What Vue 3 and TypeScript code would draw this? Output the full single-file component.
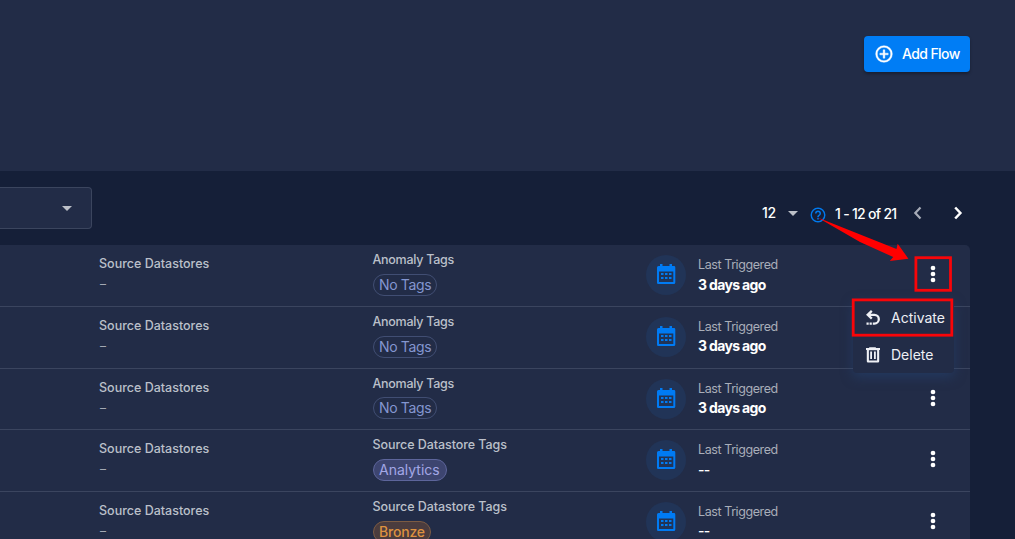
<script setup lang="ts">
interface FlowRow {
  tagTitle: string
  tag: string
  tone: 'none' | 'violet' | 'bronze'
  triggered: string
}

const rows: FlowRow[] = [
  { tagTitle: 'Anomaly Tags', tag: 'No Tags', tone: 'none', triggered: '3 days ago' },
  { tagTitle: 'Anomaly Tags', tag: 'No Tags', tone: 'none', triggered: '3 days ago' },
  { tagTitle: 'Anomaly Tags', tag: 'No Tags', tone: 'none', triggered: '3 days ago' },
  { tagTitle: 'Source Datastore Tags', tag: 'Analytics', tone: 'violet', triggered: '--' },
  { tagTitle: 'Source Datastore Tags', tag: 'Bronze', tone: 'bronze', triggered: '--' },
]
</script>

<template>
  <div class="page">
    <header class="header">
      <button class="add">
        <svg class="add-icon" viewBox="0 0 24 24" width="20" height="20">
          <path fill="currentColor" stroke="currentColor" stroke-width="0.500" d="M12 20c-4.410 0-8-3.590-8-8s3.590-8 8-8 8 3.590 8 8-3.590 8-8 8m0-18A10 10 0 0 0 2 12a10 10 0 0 0 10 10 10 10 0 0 0 10-10A10 10 0 0 0 12 2m1 5h-2v4H7v2h4v4h2v-4h4v-2h-4z" />
        </svg>
        <span class="add-text">Add Flow</span>
      </button>
    </header>

    <div class="toolbar">
      <div class="select">
        <svg class="caret" viewBox="0 0 10 5" width="10" height="5"><path fill="currentColor" d="M0 0h10L5 5z" /></svg>
      </div>
      <div class="pager">
        <span class="size">12</span>
        <svg class="caret size-caret" viewBox="0 0 10 5" width="10" height="5"><path fill="currentColor" d="M0 0h10L5 5z" /></svg>
        <svg class="help" viewBox="0 0 24 24" width="18" height="18">
          <path fill="currentColor" d="M11 18h2v-2h-2zm1-16A10 10 0 0 0 2 12a10 10 0 0 0 10 10 10 10 0 0 0 10-10A10 10 0 0 0 12 2m0 18c-4.410 0-8-3.590-8-8s3.590-8 8-8 8 3.590 8 8-3.590 8-8 8m0-14a4 4 0 0 0-4 4h2a2 2 0 0 1 2-2 2 2 0 0 1 2 2c0 2-3 1.750-3 5h2c0-2.250 3-2.500 3-5a4 4 0 0 0-4-4" />
        </svg>
        <span class="range">1 - 12 of 21</span>
        <svg class="prev" viewBox="0 0 10 14" width="10" height="14"><path d="M7.500 1.500 2.300 7l5.200 5.500" fill="none" stroke="currentColor" stroke-width="2.200" /></svg>
        <svg class="next" viewBox="0 0 10 14" width="10" height="14"><path d="M2.200 1.500 7.400 7l-5.200 5.500" fill="none" stroke="currentColor" stroke-width="2.500" /></svg>
      </div>
    </div>

    <main class="table">
      <div v-for="(row, i) in rows" :key="i" class="row">
        <div class="cell source">
          <span class="label source-label">Source Datastores</span>
          <span class="dash">–</span>
        </div>
        <div class="cell tags">
          <span class="label" :class="row.tone === 'none' ? 'anomaly-label' : 'store-label'">{{ row.tagTitle }}</span>
          <span class="tag" :class="row.tone">{{ row.tag }}</span>
        </div>
        <div class="cell time">
          <span class="disc">
            <svg viewBox="0 0 20 20" width="20" height="20">
              <path fill="currentColor" fill-rule="evenodd" d="M4 0h2.500v2h7V0H16v2h1.500A1.500 1.500 0 0 1 19.300 3.500v15a1.500 1.500 0 0 1-1.500 1.500h-15A1.500 1.500 0 0 1 1 18.500v-15A1.500 1.500 0 0 1 2.500 2H4zM3 7.500V18h14.300V7.500z" />
              <path fill="currentColor" d="M5 9h2.500v2H5zm4 0h2.500v2H9zm4 0h2.500v2H13zM5 13h2.500v2H5zm4 0h2.500v2H9zm4 0h2.500v2H13z" />
            </svg>
          </span>
          <span class="stamp">
            <span class="label last-label">Last Triggered</span>
            <strong class="when" :class="{ empty: row.triggered === '--' }">{{ row.triggered }}</strong>
          </span>
        </div>
        <svg class="kebab" viewBox="0 0 6 18" width="6" height="18">
          <g fill="#fff"><circle cx="3" cy="3" r="2.350" /><circle cx="3" cy="9" r="2.350" /><circle cx="3" cy="15" r="2.350" /></g>
        </svg>
      </div>
    </main>

    <div class="menu">
      <div class="item">
        <svg viewBox="0 0 16 16" width="16" height="16">
          <path d="M6.800.9 2.700 4.800l4.100 3.900M3 4.800h6.400a4.400 4.400 0 0 1 0 8.800H7.800" fill="none" stroke="currentColor" stroke-width="2.300" />
          <path fill="currentColor" d="M4.600 12.500h2.200v2.200H4.600zM1.500 12.500h2.200v2.200H1.500z" />
        </svg>
        <span class="activate">Activate</span>
      </div>
      <div class="item">
        <svg viewBox="0 0 16 16" width="16" height="16">
          <path fill="currentColor" d="M4.500.3h6l.7.7H15v2h-.8v11.300a1.200 1.200 0 0 1-1.200 1.200H3a1.200 1.200 0 0 1-1.200-1.200V3H1V1h2.800z" />
          <path fill="#222c47" d="M3.900 3.200h8.200v10.300H3.900z" />
          <path fill="currentColor" d="M5.200 4.500H7V12H5.200zm3.800 0h1.800V12H9z" />
        </svg>
        <span class="delete">Delete</span>
      </div>
    </div>

    <svg class="marks" viewBox="0 0 1015 539" width="1015" height="539">
      <path fill="#f00" d="M817.500 217.500 896.500 249 897.700 243.800 908.400 258.700 889.800 260.900 893.200 257 860 242z" />
      <g fill="none" stroke="#f90509" stroke-width="2.800">
        <rect x="915.900" y="257.700" width="34.600" height="32.600" />
        <rect x="853.200" y="299.900" width="98.600" height="35.300" />
      </g>
    </svg>
  </div>
</template>

<style>
body {
  margin: 0;
  overflow: hidden;
  background: #151f38;
}
</style>

<style scoped>
.page {
  position: relative;
  width: 1015px;
  height: 539px;
  overflow: hidden;
  box-sizing: border-box;
  background: #151f38;
  color: #fff;
  font-family: Inter, "Liberation Sans", sans-serif;
}
svg { display: block; flex: none; }
span, strong { white-space: nowrap; }
.header {
  display: flex;
  justify-content: flex-end;
  align-items: flex-start;
  box-sizing: border-box;
  height: 171px;
  padding: 36px 45px 0 0;
  background: #222c47;
}
.add {
  display: flex;
  align-items: center;
  width: 106px;
  height: 36px;
  padding: 0 0 0 10px;
  border: 0;
  border-radius: 4px;
  background: #007df5;
  color: #fff;
  font: 500 14px/20px Inter, sans-serif;
  box-shadow: 0 2px 3px rgba(0, 0, 0, 0.3);
}
.add-text { margin-left: 8px; letter-spacing: -0.600px; }
.toolbar {
  display: flex;
  justify-content: space-between;
  height: 74.200px;
}
.select {
  display: flex;
  align-items: center;
  justify-content: flex-end;
  box-sizing: border-box;
  width: 92px;
  height: 42px;
  margin-top: 16px;
  padding-right: 19px;
  border: 1px solid #3b455e;
  border-left: 0;
  border-radius: 0 4px 4px 0;
  background: #222c47;
}
.caret { color: #bcc0c8; }
.pager {
  display: flex;
  align-items: center;
  height: 20px;
  margin-top: 32px;
  padding-right: 52px;
  font-size: 14px;
  line-height: 20px;
  font-weight: 500;
}
.size { width: 26px; letter-spacing: -0.400px; }
.help { width: 18px; margin: 4px 0 0 11px; color: #0079ee; }
.range { width: 63px; margin: 2px 0 0 8px; letter-spacing: -0.700px; }
.prev { margin-left: 15px; color: #a6abb7; }
.next { margin-left: 30px; }
.table {
  width: 970px;
  border-radius: 0 5px 0 0;
  background: #222c47;
}
.row {
  display: grid;
  grid-template-columns: 99px 274px 273px 284px 6px;
  box-sizing: border-box;
  height: 61.700px;
  border-bottom: 1px solid #3b455f;
}
.cell { display: flex; }
.source { grid-column: 2; flex-direction: column; padding-top: 10px; }
.tags { grid-column: 3; flex-direction: column; align-items: flex-start; padding-top: 6px; }
.time { grid-column: 4; padding-top: 10px; }
.label {
  color: #bbc0ca;
  font-size: 12.500px;
  line-height: 17px;
  font-weight: 500;
}
.anomaly-label { margin-left: -0.500px; letter-spacing: -0.270px; }
.store-label { margin-left: -0.500px; letter-spacing: -0.060px; }
.dash { padding: 4px 0 0 1px; color: #a3a8b3; font-size: 12px; line-height: 16px; }
.tag {
  box-sizing: border-box;
  height: 22px;
  margin-top: 5.700px;
  padding: 0 5px;
  border: 1px solid #414e73;
  border-radius: 11px;
  font-size: 14px;
  line-height: 20px;
}
.none { width: 64px; color: #8496d0; letter-spacing: -0.350px; }
.violet { width: 74px; color: #a3a7e6; background: #3d4570; border-color: #5d659b; }
.bronze { width: 58px; color: #dd9140; background: #4b3c3e; border-color: #7c5b43; font-weight: 500; letter-spacing: -0.200px; }
.disc {
  display: grid;
  place-items: center;
  width: 40px;
  height: 40px;
  margin-right: 12px;
  border-radius: 50%;
  background: #213457;
  color: #007bf4;
}
.disc svg { margin-top: -2px; }
.stamp { display: flex; flex-direction: column; padding-top: 1px; }
.last-label { color: #a9aeb9; font-weight: 400; letter-spacing: -0.420px; }
.when { margin-top: 1.500px; font-size: 14px; line-height: 19px; font-weight: 700; letter-spacing: -0.650px; }
.when.empty { font-weight: 500; }
.kebab { grid-column: 5; margin-top: 20px; }
.menu {
  position: absolute;
  left: 853px;
  top: 299px;
  width: 101px;
  height: 74px;
  border-radius: 4px;
  background: #222c47;
  box-shadow: 0 4px 12px rgba(38, 70, 120, 0.5);
}
.item {
  display: flex;
  align-items: center;
  gap: 10px;
  height: 37px;
  padding-left: 12px;
  color: #eef0f5;
  font-size: 14px;
  line-height: 20px;
}
.marks { position: absolute; inset: 0; pointer-events: none; }
</style>
